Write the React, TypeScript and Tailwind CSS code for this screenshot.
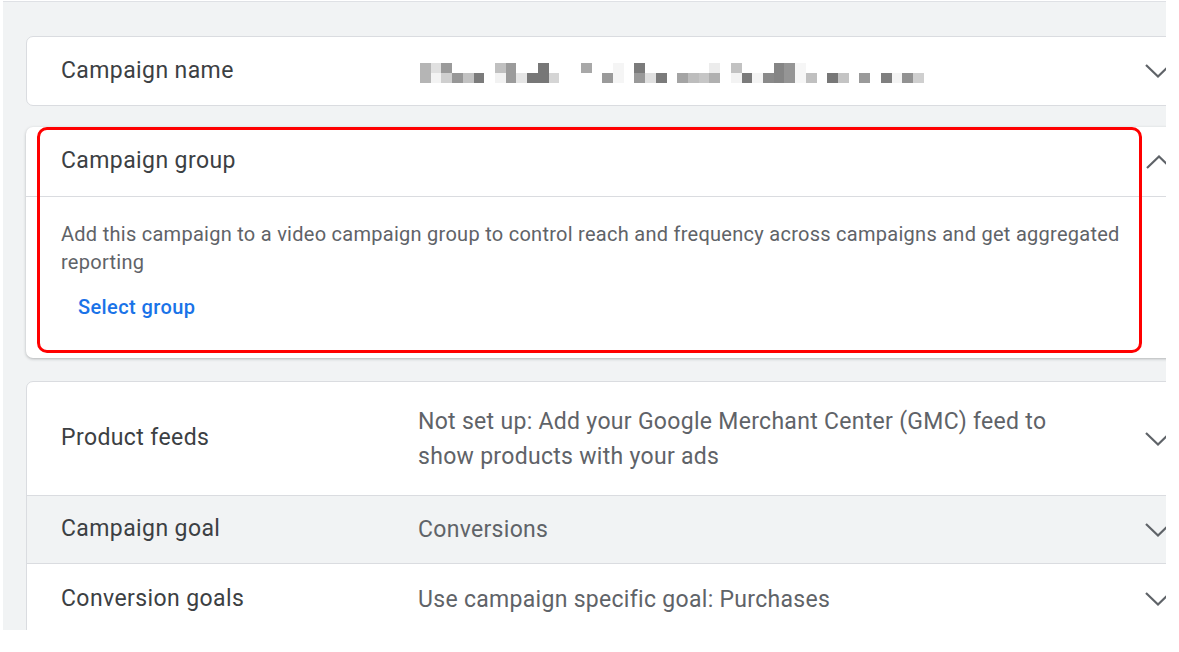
import type { ReactNode } from "react";

// pixelated, blurred campaign name: [column, top shade, bottom shade]
const NAME_CELLS: [number, string | null, string | null][] = [
  [0, "#b5b5b5", "#b5b5b5"],
  [1, "#e0e0e0", "#f3f3f3"],
  [2, "#9a9a9a", "#cfcfcf"],
  [3, null, "#979797"],
  [4, null, "#c2c2c2"],
  [5, null, "#7b7b7b"],
  [7, "#c0c0c0", "#f2f2f2"],
  [8, "#9b9b9b", "#9b9b9b"],
  [9, null, "#e5e5e5"],
  [10, null, "#777777"],
  [11, "#777777", "#777777"],
  [12, null, "#d5d5d5"],
  [15, "#a8a8a8", null],
  [17, null, "#9a9a9a"],
  [18, "#f5f5f5", "#f5f5f5"],
  [20, "#7b7b7b", "#999999"],
  [21, null, "#e0e0e0"],
  [22, null, "#7b7b7b"],
  [24, null, "#a4a4a4"],
  [25, null, "#bdbdbd"],
  [26, null, "#c6c6c6"],
  [27, "#ececec", "#b0b0b0"],
  [29, "#c2c2c2", "#f3f3f3"],
  [30, null, "#7b7b7b"],
  [31, null, "#f4f4f4"],
  [32, null, "#8a8a8a"],
  [33, "#858585", "#858585"],
  [34, "#959595", "#959595"],
  [35, "#f6f6f6", "#f6f6f6"],
  [36, null, "#c0c0c0"],
  [38, null, "#777777"],
  [39, null, "#c4c4c4"],
  [41, null, "#9a9a9a"],
  [43, null, "#7f7f7f"],
  [44, null, "#f4f4f4"],
  [45, null, "#929292"],
  [46, null, "#cfcfcf"],
];

function Chevron({ up = false }: { up?: boolean }) {
  return (
    <svg
      width="26"
      height="14"
      viewBox="0 0 26 14"
      className="shrink-0"
      fill="none"
      stroke="#5f6368"
      strokeWidth="2.2"
    >
      {up ? <polyline points="1,13 13,1.5 25,13" /> : <polyline points="1,1 13,12.5 25,1" />}
    </svg>
  );
}

function PixelName() {
  return (
    <div className="ml-[2px] grid grid-cols-[repeat(47,10.72px)] grid-rows-[10px_10px]">
      {NAME_CELLS.flatMap(([col, top, bottom]) => [
        top && (
          <div
            key={`t${col}`}
            style={{ gridColumn: col + 1, gridRow: 1, background: top }}
          />
        ),
        bottom && (
          <div
            key={`b${col}`}
            style={{ gridColumn: col + 1, gridRow: 2, background: bottom }}
          />
        ),
      ])}
    </div>
  );
}

function Row({
  label,
  children,
  className = "",
}: {
  label: string;
  children?: ReactNode;
  className?: string;
}) {
  return (
    <div className={`flex items-center pl-[34px] pr-[34px] ${className}`}>
      <div className="w-[357px] shrink-0 text-[23px] text-[#3c4043] tracking-[0.4px]">
        {label}
      </div>
      <div className="flex-1 min-w-0 text-[23px] leading-[35px] tracking-[0.3px] text-[#5f6368]">
        {children}
      </div>
      <Chevron />
    </div>
  );
}

export default function App() {
  return (
    <div
      className="relative w-[1179px] h-[652px] overflow-hidden bg-white"
      style={{ fontFamily: "Roboto, 'Liberation Sans', sans-serif" }}
    >
      <div className="ml-[3px] mt-[1px] w-[1163px] h-[629px] overflow-hidden bg-[#f1f3f4] border-t border-[#dfe1e5] pl-[23px] pt-[34px]">
        <div className="w-[1180px] h-[70px] rounded-[7px] border border-[#dadce0] bg-white">
          <Row label="Campaign name" className="h-full">
            <div className="pt-[4px]">
              <PixelName />
            </div>
          </Row>
        </div>

        <div className="mt-[21px] w-[1180px] h-[231px] rounded-[7px] bg-white shadow-[0_1px_3px_rgba(60,64,67,0.35)]">
          <div className="flex h-[70px] items-center border-b border-[#dadce0] pl-[35px] pr-[34px]">
            <div className="flex-1 text-[23px] text-[#3c4043] tracking-[0.4px]">
              Campaign group
            </div>
            <Chevron up />
          </div>
          <div className="pl-[35px] pt-[23px] w-[1110px]">
            <p className="text-[20px] leading-[28px] tracking-[0.27px] text-[#5f6368]">
              Add this campaign to a video campaign group to control reach and frequency across
              campaigns and get aggregated reporting
            </p>
            <button className="mt-[13px] px-[17px] h-[36px] text-[20px] font-medium tracking-[0.4px] text-[#1a73e8]">
              Select group
            </button>
          </div>
        </div>

        <div className="mt-[23px] w-[1180px] rounded-t-[7px] border border-[#dadce0] bg-white">
          <Row label="Product feeds" className="h-[113px]">
            Not set up: Add your Google Merchant Center (GMC) feed to
            <br />
            show products with your ads
          </Row>
          <Row
            label="Campaign goal"
            className="h-[69px] bg-[#f1f3f4] border-y border-[#dadce0]"
          >
            Conversions
          </Row>
          <Row label="Conversion goals" className="h-[70px]">
            Use campaign specific goal: Purchases
          </Row>
        </div>
      </div>

      {/* annotation */}
      <div className="absolute left-[37px] top-[127px] w-[1105px] h-[226px] rounded-[10px] border-[3px] border-[#ff0000]" />
    </div>
  );
}
